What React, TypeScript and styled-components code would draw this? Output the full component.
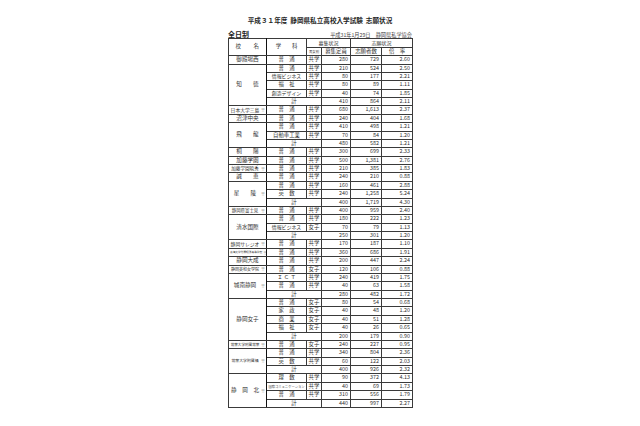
import styled, { createGlobalStyle } from "styled-components";

const GlobalStyle = createGlobalStyle`
  body {
    margin: 0;
    background: #ffffff;
  }
`;

const lineColor = "#3a3a3a";

const Page = styled.div`
  width: 184px;
  margin: 0 auto;
  padding-top: 16px;
  font-family: "Noto Sans CJK JP", "Noto Sans", sans-serif;
  color: #1e1e1e;
`;

const Title = styled.h1`
  margin: 0;
  font-size: 6.6px;
  font-weight: 700;
  line-height: 9px;
  text-align: center;
`;

const Meta = styled.div`
  display: flex;
  justify-content: space-between;
  align-items: flex-end;
  margin-top: 4px;
  height: 9px;
`;

const Division = styled.span`
  font-size: 7px;
  font-weight: 700;
  line-height: 8px;
`;

const Issuer = styled.span`
  font-size: 5.2px;
  line-height: 7px;
  color: #444;
`;

const Table = styled.table`
  width: 184px;
  border-collapse: collapse;
  table-layout: fixed;
  border: 1.5px solid #111;
`;

const Cell = styled.td<{ $align?: "left" | "center" | "right"; $size?: number; $wide?: boolean }>`
  height: 7.38px;
  padding: 0 2px;
  border: 1px solid ${lineColor};
  font-size: ${(p) => p.$size ?? 5.4}px;
  font-weight: 400;
  line-height: 1;
  text-align: ${(p) => p.$align ?? "center"};
  letter-spacing: ${(p) => (p.$wide ? "0.6px" : "0")};
  white-space: nowrap;
  overflow: hidden;
  color: #333;
`;

const HeadCell = styled(Cell)`
  height: 7.6px;
`;

const SchoolCell = styled.td`
  padding: 0 1px;
  border: 1px solid ${lineColor};
  border-right: 1.5px solid #111;
  line-height: 1;
  white-space: nowrap;
  overflow: hidden;
`;

const SchoolInner = styled.div`
  display: flex;
  align-items: center;
`;

const SchoolName = styled.span<{ $size: number }>`
  flex: 1;
  text-align: center;
  font-size: ${(p) => p.$size}px;
  color: #333;
`;

const Mark = styled.span`
  font-size: 4px;
  color: #666;
  margin-left: 1px;
`;

type Line = [string, string, string, string, string];

interface School {
  name: string;
  mark?: boolean;
  size?: number;
  rows: Line[];
}

const schools: School[] = [
  { name: "御殿場西", rows: [["普　通", "共学", "280", "729", "2.60"]] },
  {
    name: "知　　徳",
    rows: [
      ["普　通", "共学", "210", "524", "2.50"],
      ["情報ビジネス", "共学", "80", "177", "2.21"],
      ["福　祉", "共学", "80", "89", "1.11"],
      ["創造デザイン", "共学", "40", "74", "1.85"],
      ["計", "", "410", "864", "2.11"],
    ],
  },
  { name: "日本大学三島", mark: true, size: 4.8, rows: [["普　通", "共学", "680", "1,613", "2.37"]] },
  { name: "沼津中央", rows: [["普　通", "共学", "240", "404", "1.68"]] },
  {
    name: "飛　　龍",
    rows: [
      ["普　通", "共学", "410", "498", "1.21"],
      ["自動車工業", "共学", "70", "84", "1.20"],
      ["計", "", "480", "582", "1.21"],
    ],
  },
  { name: "桐　　陽", rows: [["普　通", "共学", "300", "699", "2.33"]] },
  { name: "加藤学園", rows: [["普　通", "共学", "500", "1,381", "2.76"]] },
  { name: "加藤学園暁秀", mark: true, size: 4.6, rows: [["普　通", "共学", "210", "385", "1.83"]] },
  { name: "誠　　恵", rows: [["普　通", "共学", "240", "210", "0.88"]] },
  {
    name: "星　　陵",
    mark: true,
    rows: [
      ["普　通", "共学", "160", "461", "2.88"],
      ["英　数", "共学", "240", "1,258", "5.24"],
      ["計", "", "400", "1,719", "4.30"],
    ],
  },
  { name: "静岡県富士見", mark: true, size: 4.4, rows: [["普　通", "共学", "400", "959", "2.40"]] },
  {
    name: "清水国際",
    rows: [
      ["普　通", "共学", "180", "222", "1.23"],
      ["情報ビジネス", "女子", "70", "79", "1.13"],
      ["計", "", "250", "301", "1.20"],
    ],
  },
  { name: "静岡サレジオ", mark: true, size: 4.8, rows: [["普　通", "共学", "170", "187", "1.10"]] },
  { name: "東海大学付属翔洋高等学校", mark: true, size: 2.7, rows: [["普　通", "共学", "360", "686", "1.91"]] },
  { name: "静岡大成", rows: [["普　通", "共学", "200", "447", "2.24"]] },
  { name: "静岡英和女学院", mark: true, size: 4, rows: [["普　通", "女子", "120", "106", "0.88"]] },
  {
    name: "城南静岡",
    mark: true,
    rows: [
      ["Ｉ Ｃ Ｔ", "共学", "240", "419", "1.75"],
      ["普　通", "共学", "40", "63", "1.58"],
      ["計", "", "280", "482", "1.72"],
    ],
  },
  {
    name: "静岡女子",
    rows: [
      ["普　通", "女子", "80", "54", "0.68"],
      ["家　政", "女子", "40", "48", "1.20"],
      ["商　業", "女子", "40", "51", "1.28"],
      ["福　祉", "女子", "40", "26", "0.65"],
      ["計", "", "200", "179", "0.90"],
    ],
  },
  { name: "常葉大学附属常葉", mark: true, size: 3.6, rows: [["普　通", "女子", "240", "227", "0.95"]] },
  {
    name: "常葉大学附属橘",
    mark: true,
    size: 3.9,
    rows: [
      ["普　通", "共学", "340", "804", "2.36"],
      ["英　数", "共学", "60", "122", "2.03"],
      ["計", "", "400", "926", "2.32"],
    ],
  },
  {
    name: "静　岡　北",
    mark: true,
    rows: [
      ["理　数", "共学", "90", "372", "4.13"],
      ["国際コミュニケーション", "共学", "40", "69", "1.73"],
      ["普　通", "共学", "310", "556", "1.79"],
      ["計", "", "440", "997", "2.27"],
    ],
  },
];

function courseSize(course: string) {
  if (course.length > 8) return 3.3;
  if (course.length > 5) return 4.9;
  return 5.4;
}

function App() {
  return (
    <Page>
      <GlobalStyle />
      <Title>平成３１年度&nbsp;&nbsp;静岡県私立高校入学試験&nbsp;&nbsp;志願状況</Title>
      <Meta>
        <Division>全日制</Division>
        <Issuer>平成31年1月29日　静岡県私学協会</Issuer>
      </Meta>
      <Table>
        <colgroup>
          <col style={{ width: 38 }} />
          <col style={{ width: 40 }} />
          <col style={{ width: 15 }} />
          <col style={{ width: 29 }} />
          <col style={{ width: 31 }} />
          <col style={{ width: 31 }} />
        </colgroup>
        <thead>
          <tr>
            <HeadCell as="th" rowSpan={2} $wide style={{ borderRight: "1.5px solid #111" }}>
              校　　名
            </HeadCell>
            <HeadCell as="th" rowSpan={2}>
              学　　科
            </HeadCell>
            <HeadCell as="th" colSpan={2} $size={5}>
              募集状況
            </HeadCell>
            <HeadCell as="th" colSpan={2} $size={5}>
              志願状況
            </HeadCell>
          </tr>
          <tr>
            <HeadCell as="th" $size={3.4} style={{ padding: 0 }}>
              男女別
            </HeadCell>
            <HeadCell as="th">募集定員</HeadCell>
            <HeadCell as="th">志願者数</HeadCell>
            <HeadCell as="th">倍　率</HeadCell>
          </tr>
        </thead>
        <tbody>
          {schools.map((school) =>
            school.rows.map((row, i) => {
              const [course, sex, cap, apps, ratio] = row;
              const total = course === "計";
              return (
                <tr key={school.name + i}>
                  {i === 0 && (
                    <SchoolCell rowSpan={school.rows.length}>
                      <SchoolInner>
                        <SchoolName $size={school.size ?? 5.6}>{school.name}</SchoolName>
                        {school.mark && <Mark>※</Mark>}
                      </SchoolInner>
                    </SchoolCell>
                  )}
                  {total ? (
                    <Cell colSpan={2}>計</Cell>
                  ) : (
                    <>
                      <Cell $size={courseSize(course)} style={{ padding: 0 }}>
                        {course}
                      </Cell>
                      <Cell style={{ padding: 0 }}>{sex}</Cell>
                    </>
                  )}
                  <Cell $align="right">{cap}</Cell>
                  <Cell $align="right">{apps}</Cell>
                  <Cell $align="right">{ratio}</Cell>
                </tr>
              );
            })
          )}
        </tbody>
      </Table>
    </Page>
  );
}

export default App;
